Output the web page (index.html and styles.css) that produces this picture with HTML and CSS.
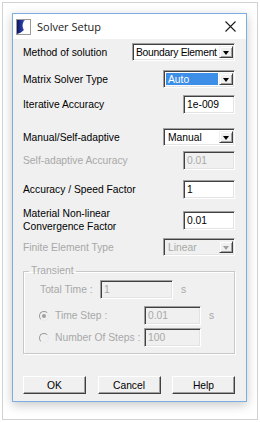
FILE: index.html
```html
<!DOCTYPE html>
<html>
<head>
    <title>Solver Setup</title>
    <link rel="stylesheet" href="styles.css">
</head>
<body>
    <div class="frame">
        <div class="window">
            <div class="titlebar">
                <svg class="app-icon" width="15" height="16" viewBox="0 0 15 16">
                    <defs>
                        <linearGradient id="navy" x1="0" y1="0" x2="1" y2="0">
                            <stop offset="0" stop-color="#0c1660"/>
                            <stop offset="0.7" stop-color="#2a3fa8"/>
                            <stop offset="1" stop-color="#6f86d8"/>
                        </linearGradient>
                    </defs>
                    <rect x="0.5" y="0.5" width="14" height="15" fill="#fff" stroke="#9a9a9a"/>
                    <path d="M1 1 H9 C6 4 6 8 8 11 C6 13 4 14 1 15 Z" fill="url(#navy)"/>
                </svg>
                <span class="title">Solver Setup</span>
                <svg class="close" width="11" height="11" viewBox="0 0 11 11">
                    <path d="M0.5 0.5 L10.5 10.5 M10.5 0.5 L0.5 10.5" stroke="#1b1b1b" stroke-width="1.1"/>
                </svg>
            </div>

            <div class="client">
                <div class="row r-method">
                    <span class="label">Method of solution</span>
                    <div class="combo combo-wide">
                        <span class="combo-text">Boundary Element</span>
                        <span class="arrow"></span>
                    </div>
                </div>

                <div class="row r-matrix">
                    <span class="label">Matrix Solver Type</span>
                    <div class="combo">
                        <span class="combo-text selected">Auto</span>
                        <span class="arrow"></span>
                    </div>
                </div>

                <div class="row r-iter">
                    <span class="label">Iterative Accuracy</span>
                    <div class="textbox">1e-009</div>
                </div>

                <div class="row r-manual">
                    <span class="label">Manual/Self-adaptive</span>
                    <div class="combo">
                        <span class="combo-text">Manual</span>
                        <span class="arrow"></span>
                    </div>
                </div>

                <div class="row r-self">
                    <span class="label disabled">Self-adaptive Accuracy</span>
                    <div class="textbox off">0.01</div>
                </div>

                <div class="row r-speed">
                    <span class="label">Accuracy / Speed Factor</span>
                    <div class="textbox">1</div>
                </div>

                <div class="row r-material">
                    <span class="label">Material Non-linear<br>Convergence Factor</span>
                    <div class="textbox">0.01</div>
                </div>

                <div class="row r-finite">
                    <span class="label disabled">Finite Element Type</span>
                    <div class="combo off">
                        <span class="combo-text">Linear</span>
                        <span class="arrow"></span>
                    </div>
                </div>

                <fieldset class="group">
                    <legend>Transient</legend>
                    <div class="grow g-total">
                        <span class="glabel total-label">Total Time :</span>
                        <div class="textbox off total-box">1</div>
                        <span class="unit">s</span>
                    </div>
                    <div class="grow g-step">
                        <span class="radio checked"></span>
                        <span class="glabel radio-label">Time Step :</span>
                        <div class="textbox off step-box">0.01</div>
                        <span class="unit">s</span>
                    </div>
                    <div class="grow g-count">
                        <span class="radio"></span>
                        <span class="glabel radio-label">Number Of Steps :</span>
                        <div class="textbox off step-box">100</div>
                    </div>
                </fieldset>

                <div class="buttons">
                    <button class="btn">OK</button>
                    <button class="btn">Cancel</button>
                    <button class="btn">Help</button>
                </div>
            </div>
        </div>
    </div>
</body>
</html>
```

FILE: styles.css
```css
body {
    margin: 0;
    background-color: #fff;
    font-family: "Liberation Sans", Arial, sans-serif;
    font-size: 10.3px;
    color: #000;
}

.frame {
    margin: 2px;
    width: 256px;
    height: 418px;
    box-sizing: border-box;
    border: 1px solid #d2d2d2;
    padding: 10px 0 0 9px;
}

.window {
    width: 235px;
    height: 389px;
    box-sizing: border-box;
    border: 1px solid #7eaee0;
    background-color: #f0f0f0;
    box-shadow: 0 3px 10px rgba(0, 0, 0, 0.22);
    display: flex;
    flex-direction: column;
}

.titlebar {
    height: 25px;
    background-color: #fff;
    display: flex;
    align-items: center;
    padding-left: 3px;
}

.app-icon {
    display: block;
}

.title {
    margin-left: 6px;
    font-family: "Open Sans", "Noto Sans", sans-serif;
    font-size: 11px;
    color: #1a1a1a;
    flex: 1;
}

.close {
    margin-right: 10px;
}

.client {
    padding: 0 11px 0 10px;
}

.row {
    display: flex;
    align-items: center;
    justify-content: space-between;
}

.label {
    line-height: 13px;
}

.disabled {
    color: #a8a8a8;
}

.r-method { margin-top: 4px; }
.r-matrix { margin-top: 9px; }
.r-iter { margin-top: 7px; }
.r-manual { margin-top: 14px; }
.r-self { margin-top: 5px; }
.r-speed { margin-top: 10px; }
.r-material { margin-top: 8px; height: 26px; }
.r-finite { margin-top: 5px; }

/* sunken controls */
.combo,
.textbox {
    box-sizing: border-box;
    height: 19px;
    background-color: #fff;
    border-top: 1px solid #a0a0a0;
    border-left: 1px solid #a0a0a0;
    border-right: 1px solid #fff;
    border-bottom: 1px solid #fff;
    box-shadow: inset 1px 1px 0 #404040, inset -1px -1px 0 #e3e3e3;
}

.combo {
    width: 72px;
    height: 18px;
    display: flex;
    padding: 2px 1px 2px 2px;
}

.combo-wide {
    width: 103px;
}

.combo-wide .combo-text {
    letter-spacing: -0.25px;
    padding-left: 1px;
}

.combo-text {
    flex: 1;
    line-height: 14px;
    padding-left: 2px;
    white-space: nowrap;
    overflow: hidden;
}

.combo-text.selected {
    background-color: #3d8ee6;
    color: #fff;
    margin-right: 1px;
}

.arrow {
    width: 14px;
    flex-shrink: 0;
    box-sizing: border-box;
    background-color: #f0f0f0;
    border-top: 1px solid #f0f0f0;
    border-left: 1px solid #f0f0f0;
    border-right: 1px solid #404040;
    border-bottom: 1px solid #404040;
    box-shadow: inset 1px 1px 0 #fff, inset -1px -1px 0 #a0a0a0;
    display: flex;
    align-items: center;
    justify-content: center;
}

.arrow::after {
    content: "";
    border-left: 3px solid transparent;
    border-right: 3px solid transparent;
    border-top: 4px solid #000;
    margin-top: 1px;
}

.combo.off,
.textbox.off {
    background-color: #f0f0f0;
    color: #a8a8a8;
}

.combo.off .arrow::after {
    border-top-color: #a0a0a0;
}

.textbox {
    width: 52px;
    padding: 0 3px;
    line-height: 17px;
}

/* group box */
.group {
    margin: 9px 0 0 0;
    padding: 0 0 8px 14px;
    width: 212px;
    box-sizing: border-box;
    border: 1px solid #c8c8c8;
    box-shadow: inset 1px 1px 0 #fff, 1px 1px 0 #fff;
    height: 89px;
}

.group legend {
    color: #a8a8a8;
    padding: 0 2px;
    margin-left: -9px;
    line-height: 12px;
}

.grow {
    display: flex;
    align-items: center;
}

.glabel {
    color: #a8a8a8;
}

.g-total { margin-top: 3px; padding-left: 2px; }
.g-step { margin-top: 7px; }
.g-count { margin-top: 3px; }

.total-label {
    width: 60px;
}

.total-box {
    width: 73px;
}

.step-box {
    width: 57px;
}

.unit {
    color: #a8a8a8;
    margin-left: 8px;
}

.radio {
    width: 10px;
    height: 10px;
    box-sizing: border-box;
    border-radius: 50%;
    border: 1px solid;
    border-color: #9a9a9a #eaeaea #eaeaea #9a9a9a;
    background-color: #f0f0f0;
    display: flex;
    align-items: center;
    justify-content: center;
    margin-left: 1px;
}

.radio.checked::after {
    content: "";
    width: 4px;
    height: 4px;
    border-radius: 50%;
    background-color: #a0a0a0;
}

.radio-label {
    margin-left: 6px;
    width: 89px;
    white-space: nowrap;
}

/* buttons */
.buttons {
    margin-top: 22px;
    display: flex;
    justify-content: space-between;
    width: 212px;
}

.btn {
    width: 63px;
    height: 18px;
    padding: 0;
    font-family: "Liberation Sans", Arial, sans-serif;
    font-size: 10.3px;
    color: #000;
    background-color: #f0f0f0;
    border-top: 1px solid #fff;
    border-left: 1px solid #fff;
    border-right: 1px solid #404040;
    border-bottom: 1px solid #404040;
    box-shadow: inset -1px -1px 0 #a0a0a0;
}
```
